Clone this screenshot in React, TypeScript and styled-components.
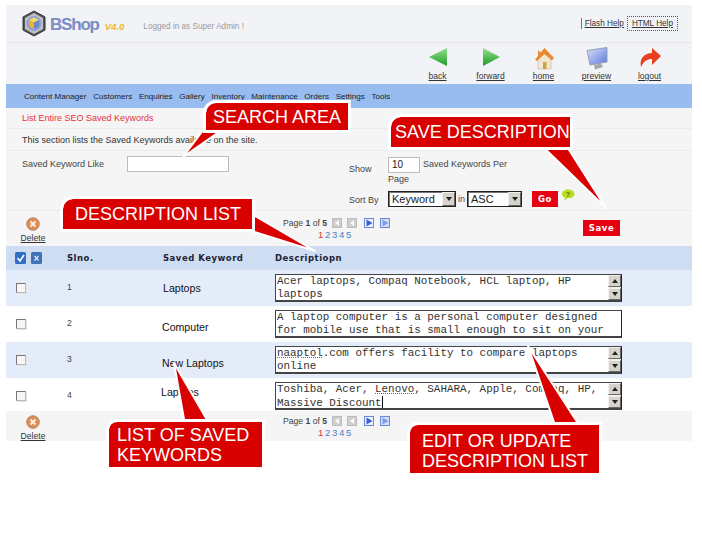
import * as React from "react";
import styled, { createGlobalStyle } from "styled-components";

const GlobalStyle = createGlobalStyle`
  html, body {
    margin: 0;
    padding: 0;
    background: #fff;
    font-family: "Liberation Sans", Arial, sans-serif;
    color: #333;
  }
`;

const Page = styled.div`
  position: relative;
  width: 702px;
  height: 535px;
  padding: 5px 10px 0 6px;
  box-sizing: border-box;
  overflow: hidden;
`;

const Header = styled.div`
  height: 37px;
  background: #f2f3f7;
  border-bottom: 1px solid #e6e6ea;
  display: flex;
  align-items: center;
  padding: 0 14px 0 16px;
`;

const Brand = styled.div`
  display: flex;
  align-items: center;
`;

const BrandName = styled.span`
  font-size: 17px;
  font-weight: bold;
  letter-spacing: -1.2px;
  color: #7b8cc4;
  margin-left: 4px;
  margin-top: 3px;
`;

const BrandVersion = styled.span`
  font-size: 9.5px;
  font-weight: bold;
  font-style: italic;
  color: #ecb92e;
  margin-left: 6px;
  margin-top: 6px;
`;

const LoggedIn = styled.span`
  font-size: 8.2px;
  color: #9a9a9a;
  margin-left: 19px;
  margin-top: 6px;
`;

const HelpLinks = styled.div`
  margin-left: auto;
  display: flex;
  align-items: center;
`;

const FlashHelp = styled.a`
  font-size: 8.2px;
  color: #333;
  text-decoration: underline;
  border-left: 1px solid #777;
  padding: 1px 2px 1px 3px;
`;

const HtmlHelp = styled.a`
  font-size: 8.2px;
  color: #333;
  text-decoration: underline;
  border: 1px dotted #555;
  padding: 2px 4px;
  margin-left: 1px;
`;

const Toolbar = styled.div`
  height: 41px;
  background: #f2f3f7;
  display: flex;
  justify-content: flex-end;
  padding-right: 16px;
`;

const ToolItem = styled.a`
  width: 53px;
  height: 41px;
  padding-top: 4px;
  box-sizing: border-box;
  display: flex;
  flex-direction: column;
  align-items: center;
  font-size: 8.5px;
  color: #333;
  text-decoration: underline;
`;

const ToolIcon = styled.svg`
  width: 24px;
  height: 24px;
`;

const Nav = styled.div`
  height: 24px;
  background: #98bcf0;
  display: flex;
  align-items: center;
  padding-left: 18px;
  gap: 6.6px;
  font-size: 8.1px;
  color: #222;
`;

const Section = styled.div<{ $height: number }>`
  height: ${(p) => p.$height}px;
  background: #f5f5f5;
  border-bottom: 1px solid #ebebeb;
  box-sizing: border-box;
  display: flex;
  align-items: center;
  padding-left: 16px;
  font-size: 9px;
`;

const Crumb = styled.span`
  color: #e8303a;
`;

const FilterSection = styled.div`
  height: 60px;
  background: #f5f5f5;
  border-bottom: 1px solid #ebebeb;
  box-sizing: border-box;
  display: flex;
  padding: 5px 0 0 16px;
  font-size: 9px;
  color: #444;
`;

const KeywordField = styled.div`
  width: 327px;
  display: flex;
  align-items: flex-start;
  padding-top: 3px;
`;

const KeywordLabel = styled.span`
  width: 105px;
  flex: none;
`;

const TextBox = styled.div<{ $width: number }>`
  width: ${(p) => p.$width}px;
  height: 16px;
  box-sizing: border-box;
  background: #fff;
  border: 1px solid #bbb;
  font-size: 10px;
  line-height: 14px;
  padding-left: 3px;
  color: #222;
  flex: none;
`;

const KeywordBox = styled(TextBox)`
  margin-top: -3px;
`;

const Options = styled.div`
  display: grid;
  grid-template-columns: 39px auto;
  row-gap: 1px;
`;

const ShowLabel = styled.span`
  padding-top: 8px;
`;

const SortLabel = styled.span`
  align-self: center;
`;

const PerPage = styled.div`
  width: 145px;
  line-height: 13px;
`;

const PerPageLine = styled.div`
  display: flex;
  gap: 3px;
  align-items: center;
  height: 17px;
`;

const SortLine = styled.div`
  display: flex;
  align-items: center;
  height: 16px;
`;

const Select = styled.div<{ $width: number }>`
  width: ${(p) => p.$width}px;
  height: 16px;
  box-sizing: border-box;
  display: flex;
  background: #fff;
  border: 1px solid #222;
  box-shadow: inset 1px 1px 0 #777;
  font-size: 11px;
  line-height: 14px;
  padding-left: 3px;
  color: #222;
`;

const SelectText = styled.span`
  flex: 1;
`;

const ArrowButton = styled.span`
  width: 13px;
  flex: none;
  background: #d6d3cc;
  border: 1px solid #f2f1ee;
  border-right-color: #666;
  border-bottom-color: #666;
  box-sizing: border-box;
  display: flex;
  align-items: center;
  justify-content: center;
`;

const DownArrow = styled.i`
  width: 0;
  height: 0;
  border-left: 3.5px solid transparent;
  border-right: 3.5px solid transparent;
  border-top: 4px solid #222;
`;

const UpArrow = styled.i`
  width: 0;
  height: 0;
  border-left: 3.5px solid transparent;
  border-right: 3.5px solid transparent;
  border-bottom: 4px solid #222;
`;

const InWord = styled.span`
  margin: 0 2px;
`;

const RedButton = styled.span<{ $width: number; $left: number }>`
  width: ${(p) => p.$width}px;
  height: 16px;
  margin-left: ${(p) => p.$left}px;
  flex: none;
  display: flex;
  align-items: center;
  justify-content: center;
  background: #e60012;
  color: #fff;
  font-family: "DejaVu Sans", Verdana, sans-serif;
  font-size: 8.5px;
  font-weight: bold;
  letter-spacing: 0.6px;
`;

const HelpBubble = styled.svg`
  width: 14px;
  height: 12px;
  margin: -8px 0 0 3px;
`;

const ListBar = styled.div<{ $height: number; $pad: number }>`
  height: ${(p) => p.$height}px;
  background: #f5f5f5;
  display: flex;
  align-items: flex-start;
  padding-top: ${(p) => p.$pad}px;
  box-sizing: border-box;
  font-size: 8.6px;
  color: #444;
`;

const DeleteLink = styled.a`
  width: 54px;
  flex: none;
  display: flex;
  flex-direction: column;
  align-items: center;
  gap: 2px;
  text-decoration: underline;
  color: #333;
`;

const Pager = styled.div`
  margin-left: 223px;
  width: 120px;
  line-height: 12px;
`;

const PagerLine = styled.div`
  display: flex;
  align-items: center;
  gap: 5px;
`;

const PageIcon = styled.svg<{ $gap?: number }>`
  width: 10px;
  height: 10px;
  margin-left: ${(p) => p.$gap ?? 0}px;
`;

const PageNumbers = styled.div`
  padding-left: 35px;
  font-size: 9.6px;
  word-spacing: -1px;
  color: #4a80c8;
`;

const ActivePage = styled.span`
  color: #e8303a;
`;

const SaveSlot = styled.div`
  margin-left: auto;
  margin-right: 72px;
  margin-top: 3px;
`;

const Columns = styled.div<{ $height: number; $tone: "head" | "odd" | "even" }>`
  height: ${(p) => p.$height}px;
  background: ${(p) =>
    p.$tone === "head" ? "#cfddf3" : p.$tone === "odd" ? "#e4ecf9" : "#fff"};
  display: grid;
  grid-template-columns: 61px 96px 112px 1fr;
  align-items: center;
`;

const HeadCheck = styled.div`
  display: flex;
  gap: 5px;
  padding-left: 9px;
`;

const HeadText = styled.span`
  font-family: "DejaVu Sans", Verdana, sans-serif;
  font-size: 8.5px;
  font-weight: bold;
  letter-spacing: 0.5px;
  color: #223;
`;

const CheckCell = styled.div`
  padding-left: 10px;
  display: flex;
  align-self: start;
  margin-top: 13px;
`;

const CheckBox = styled.span`
  width: 10px;
  height: 10px;
  box-sizing: border-box;
  background: #f6f6f4;
  border: 1px solid #bbb;
  border-top-color: #777;
  border-left-color: #777;
  box-shadow: 1px 1px 0 #e2e2e2;
`;

const Slno = styled.span`
  font-size: 8.6px;
  line-height: 10px;
  color: #444;
  align-self: start;
  margin-top: 12px;
`;

const KeywordName = styled.span<{ $left: number; $top: number }>`
  font-size: 10.6px;
  line-height: 12px;
  color: #111;
  align-self: start;
  margin-left: ${(p) => p.$left}px;
  margin-top: ${(p) => p.$top}px;
`;

const Memo = styled.div`
  width: 347px;
  height: 28px;
  box-sizing: border-box;
  background: #fff;
  border: 1px solid #444;
  border-right-color: #222;
  border-bottom-width: 2px;
  display: flex;
  align-self: start;
  margin-top: 4px;
`;

const MemoText = styled.div`
  flex: 1;
  padding-left: 1px;
  font-family: "Liberation Mono", "Courier New", monospace;
  font-size: 10.9px;
  line-height: 13px;
  color: #333;
  white-space: pre;
`;

const Misspelt = styled.span`
  text-decoration: underline dotted #e33;
`;

const Caret = styled.i`
  display: inline-block;
  width: 1px;
  height: 12px;
  background: #111;
  vertical-align: -2px;
`;

const ScrollBar = styled.div`
  width: 13px;
  flex: none;
  display: flex;
  flex-direction: column;
  justify-content: space-between;
  background: #f1efe9;
`;

const ScrollButton = styled(ArrowButton)`
  width: 13px;
  height: 12px;
`;

const CalloutBox = styled.div<{
  $left: number;
  $top: number;
  $width: number;
  $height: number;
  $radius: number;
  $pad: number;
  $padTop: number;
}>`
  position: absolute;
  left: ${(p) => p.$left}px;
  top: ${(p) => p.$top}px;
  width: ${(p) => p.$width}px;
  height: ${(p) => p.$height}px;
  box-sizing: border-box;
  background: #d90000;
  outline: 3px solid #fff;
  border-radius: ${(p) => p.$radius}px 0 0 0;
  padding-left: ${(p) => p.$pad}px;
  padding-top: ${(p) => p.$padTop}px;
  display: flex;
  align-items: center;
  color: #fff;
  font-size: 18px;
  line-height: 19.5px;
`;

const Tails = styled.svg`
  position: absolute;
  left: 0;
  top: 0;
`;

const tails = [
  "207,125 229,125 183,157",
  "538,142 564,142 606,208",
  "240,220 255,216 315,251 245,229",
  "185,425 210,425 174,363",
  "556,428 581,428 528,346",
];

const CalloutTails = () => (
  <Tails width="702" height="535" viewBox="0 0 702 535">
    {tails.map((points) => (
      <polygon key={points} points={points} fill="#d90000" stroke="#fff" strokeWidth="2" strokeLinejoin="round" />
    ))}
  </Tails>
);

const LogoIcon = () => (
  <svg width="24" height="27" viewBox="0 0 24 27">
    <path d="M12 1 L23 7 V20 L12 26 L1 20 V7 Z" fill="#555" stroke="#333" strokeWidth="1" />
    <path d="M12 3 L21 8 V19 L12 24 L3 19 V8 Z" fill="#c2c2c2" />
    <circle cx="12" cy="13.5" r="7.5" fill="#8f9fd6" />
    <path d="M12 7.5 L17 10 L12 12.5 L7 10 Z" fill="#f6dc5a" />
    <path d="M7 10 L12 12.5 V19 L7 16.5 Z" fill="#eab32a" />
    <path d="M17 10 L12 12.5 V19 L17 16.5 Z" fill="#6e86c8" />
  </svg>
);

const BackIcon = () => (
  <ToolIcon viewBox="0 0 24 24">
    <defs>
      <linearGradient id="greenBack" x1="0" y1="0" x2="0" y2="1">
        <stop offset="0" stopColor="#93e08a" />
        <stop offset="1" stopColor="#1f9c2a" />
      </linearGradient>
    </defs>
    <path d="M3 10 L21 1 V19 Z" fill="url(#greenBack)" />
  </ToolIcon>
);

const ForwardIcon = () => (
  <ToolIcon viewBox="0 0 24 24">
    <defs>
      <linearGradient id="greenForward" x1="0" y1="0" x2="0" y2="1">
        <stop offset="0" stopColor="#93e08a" />
        <stop offset="1" stopColor="#1f9c2a" />
      </linearGradient>
    </defs>
    <path d="M21 10 L4 1 V19 Z" fill="url(#greenForward)" />
  </ToolIcon>
);

const HomeIcon = () => (
  <ToolIcon viewBox="0 0 24 24">
    <path d="M6 12 V22 H19 V12 L12.5 6 Z" fill="#f1e6d0" stroke="#c9b48e" strokeWidth="0.6" />
    <path d="M3 12.5 L6 9 V3 L8.5 5.5 L12.5 1 L22 11 L20 13.5 L12.5 7 L5 14 Z" fill="#ea8a2e" />
    <rect x="11" y="15" width="3.5" height="7" fill="#c9a24a" />
  </ToolIcon>
);

const PreviewIcon = () => (
  <ToolIcon viewBox="0 0 24 24">
    <defs>
      <linearGradient id="screenGlow" x1="0" y1="0" x2="1" y2="1">
        <stop offset="0" stopColor="#d8e2fb" />
        <stop offset="1" stopColor="#5f78dc" />
      </linearGradient>
    </defs>
    <path d="M2 3.5 L22 0.5 V15 L5 18 Z" fill="url(#screenGlow)" stroke="#8e97b8" strokeWidth="0.9" />
    <path d="M9 18 L16 16.5 L18 20 L10 22.5 Z" fill="#a5a7ab" />
  </ToolIcon>
);

const LogoutIcon = () => (
  <ToolIcon viewBox="0 0 24 24">
    <path d="M3 20 C1 11 7 6 14 6 V1 L23 9 L14 18 V12 C9 12 6 14 3 20 Z" fill="#e8401f" />
  </ToolIcon>
);

const DeleteIcon = () => (
  <svg width="14" height="14" viewBox="0 0 14 14">
    <circle cx="7" cy="7" r="6.3" fill="#dc8e58" stroke="#b4764a" strokeWidth="0.8" />
    <path d="M4.5 4.5 L9.5 9.5 M9.5 4.5 L4.5 9.5" stroke="#fbeee4" strokeWidth="1.9" />
  </svg>
);

const GrayNav = () => (
  <PageIcon viewBox="0 0 10 10">
    <rect x="0.5" y="0.5" width="9" height="9" fill="#cfcfcf" stroke="#bbb" />
    <path d="M7 2 L3 5 L7 8 Z" fill="#fafafa" />
  </PageIcon>
);

const BlueNav = ({ gap, light }: { gap?: number; light?: boolean }) => (
  <PageIcon viewBox="0 0 10 10" $gap={gap}>
    <rect x="0.5" y="0.5" width="9" height="9" fill={light ? "#d5def5" : "#eef1fb"} stroke="#6a88dc" />
    <path d="M2.5 1.5 L8.5 5 L2.5 8.5 Z" fill={light ? "#7f9de6" : "#3a60d0"} />
  </PageIcon>
);

const HeadButton = ({ mark }: { mark: "check" | "cross" }) => (
  <svg width="11" height="12" viewBox="0 0 11 12">
    <rect width="11" height="12" rx="1.5" fill={mark === "check" ? "#2f6fc4" : "#3f70b8"} />
    {mark === "check" ? (
      <path d="M2.5 6 L5 9 L9 3" stroke="#fff" strokeWidth="1.6" fill="none" />
    ) : (
      <path d="M3.5 4 L7.5 8.5 M7.5 4 L3.5 8.5" stroke="#dfe8f7" strokeWidth="1.2" />
    )}
  </svg>
);

const PagerBlock = () => (
  <Pager>
    <PagerLine>
      <span>
        Page <b>1</b> of <b>5</b>
      </span>
      <GrayNav />
      <GrayNav />
      <BlueNav gap={2} />
      <BlueNav gap={1} light />
    </PagerLine>
    <PageNumbers>
      <ActivePage>1</ActivePage> 2 3 4 5
    </PageNumbers>
  </Pager>
);

const rows = [
  {
    no: 1,
    name: "Laptops",
    left: 0,
    top: 12,
    height: 36,
    scroll: true,
    text: <>{"Acer laptops, Compaq Notebook, HCL laptop, HP\nlaptops"}</>,
  },
  {
    no: 2,
    name: "Computer",
    left: -1,
    top: 15,
    height: 36,
    scroll: false,
    text: <>{"A laptop computer is a personal computer designed\nfor mobile use that is small enough to sit on your"}</>,
  },
  {
    no: 3,
    name: "New Laptops",
    left: -1,
    top: 15,
    height: 36,
    scroll: true,
    text: (
      <>
        <Misspelt>naaptol</Misspelt>
        {".com offers facility to compare laptops\nonline"}
      </>
    ),
  },
  {
    no: 4,
    name: "Laptops",
    left: -2,
    top: 8,
    height: 33,
    scroll: true,
    text: (
      <>
        {"Toshiba, Acer, "}
        <Misspelt>Lenovo</Misspelt>
        {", SAHARA, Apple, Compaq, HP,\nMassive Discount"}
        <Caret />
      </>
    ),
  },
];

const navItems = [
  "Content Manager",
  "Customers",
  "Enquiries",
  "Gallery",
  "Inventory",
  "Maintenance",
  "Orders",
  "Settings",
  "Tools",
];

export default function App() {
  return (
    <Page>
      <GlobalStyle />
      <Header>
        <Brand>
          <LogoIcon />
          <BrandName>BShop</BrandName>
          <BrandVersion>V4.0</BrandVersion>
          <LoggedIn>Logged in as Super Admin !</LoggedIn>
        </Brand>
        <HelpLinks>
          <FlashHelp>Flash Help</FlashHelp>
          <HtmlHelp>HTML Help</HtmlHelp>
        </HelpLinks>
      </Header>
      <Toolbar>
        <ToolItem>
          <BackIcon />
          back
        </ToolItem>
        <ToolItem>
          <ForwardIcon />
          forward
        </ToolItem>
        <ToolItem>
          <HomeIcon />
          home
        </ToolItem>
        <ToolItem>
          <PreviewIcon />
          preview
        </ToolItem>
        <ToolItem>
          <LogoutIcon />
          logout
        </ToolItem>
      </Toolbar>
      <Nav>
        {navItems.map((item) => (
          <span key={item}>{item}</span>
        ))}
      </Nav>
      <Section $height={21}>
        <Crumb>List Entire SEO Saved Keywords</Crumb>
      </Section>
      <Section $height={22}>This section lists the Saved Keywords available on the site.</Section>
      <FilterSection>
        <KeywordField>
          <KeywordLabel>Saved Keyword Like</KeywordLabel>
          <KeywordBox $width={102} />
        </KeywordField>
        <Options>
          <ShowLabel>Show</ShowLabel>
          <PerPage>
            <PerPageLine>
              <TextBox $width={32}>10</TextBox>
              <span>Saved Keywords Per</span>
            </PerPageLine>
            Page
          </PerPage>
          <SortLabel>Sort By</SortLabel>
          <SortLine>
            <Select $width={68}>
              <SelectText>Keyword</SelectText>
              <ArrowButton>
                <DownArrow />
              </ArrowButton>
            </Select>
            <InWord>in</InWord>
            <Select $width={55}>
              <SelectText>ASC</SelectText>
              <ArrowButton>
                <DownArrow />
              </ArrowButton>
            </Select>
            <RedButton $width={26} $left={10}>
              Go
            </RedButton>
            <HelpBubble viewBox="0 0 14 12">
              <path d="M1 5 C1 2 4 0.5 7 0.5 C10.5 0.5 13.5 2 13.5 5 C13.5 8 10 9.5 7 9 L3 11.5 L4 8.5 C2 8 1 7 1 5 Z" fill="#b5e01f" />
              <text x="7" y="8" fontSize="8" fontWeight="bold" textAnchor="middle" fill="#6a7a10" fontFamily="Liberation Sans">?</text>
            </HelpBubble>
          </SortLine>
        </Options>
      </FilterSection>
      <ListBar $height={35} $pad={6}>
        <DeleteLink>
          <DeleteIcon />
          Delete
        </DeleteLink>
        <PagerBlock />
        <SaveSlot>
          <RedButton $width={37} $left={0}>
            Save
          </RedButton>
        </SaveSlot>
      </ListBar>
      <Columns $height={24} $tone="head">
        <HeadCheck>
          <HeadButton mark="check" />
          <HeadButton mark="cross" />
        </HeadCheck>
        <HeadText>Slno.</HeadText>
        <HeadText>Saved Keyword</HeadText>
        <HeadText>Descriptiopn</HeadText>
      </Columns>
      {rows.map((row) => (
        <Columns key={row.no} $height={row.height} $tone={row.no % 2 === 1 ? "odd" : "even"}>
          <CheckCell>
            <CheckBox />
          </CheckCell>
          <Slno>{row.no}</Slno>
          <KeywordName $left={row.left} $top={row.top}>
            {row.name}
          </KeywordName>
          <Memo>
            <MemoText>{row.text}</MemoText>
            {row.scroll && (
              <ScrollBar>
                <ScrollButton>
                  <UpArrow />
                </ScrollButton>
                <ScrollButton>
                  <DownArrow />
                </ScrollButton>
              </ScrollBar>
            )}
          </Memo>
        </Columns>
      ))}
      <ListBar $height={30} $pad={4}>
        <DeleteLink>
          <DeleteIcon />
          Delete
        </DeleteLink>
        <PagerBlock />
      </ListBar>
      <CalloutTails />
      <CalloutBox $left={206} $top={103} $width={142} $height={27} $radius={10} $pad={7} $padTop={2}>
        SEARCH AREA
      </CalloutBox>
      <CalloutBox $left={391} $top={117} $width={179} $height={30} $radius={10} $pad={4} $padTop={2}>
        SAVE DESCRIPTION
      </CalloutBox>
      <CalloutBox $left={63} $top={199} $width={189} $height={30} $radius={10} $pad={12} $padTop={2}>
        DESCRIPTION LIST
      </CalloutBox>
      <CalloutBox $left={109} $top={422} $width={153} $height={45} $radius={8} $pad={8} $padTop={2}>
        LIST OF SAVED
        <br />
        KEYWORDS
      </CalloutBox>
      <CalloutBox $left={410} $top={425} $width={189} $height={48} $radius={8} $pad={12} $padTop={5}>
        EDIT OR UPDATE
        <br />
        DESCRIPTION LIST
      </CalloutBox>
    </Page>
  );
}
